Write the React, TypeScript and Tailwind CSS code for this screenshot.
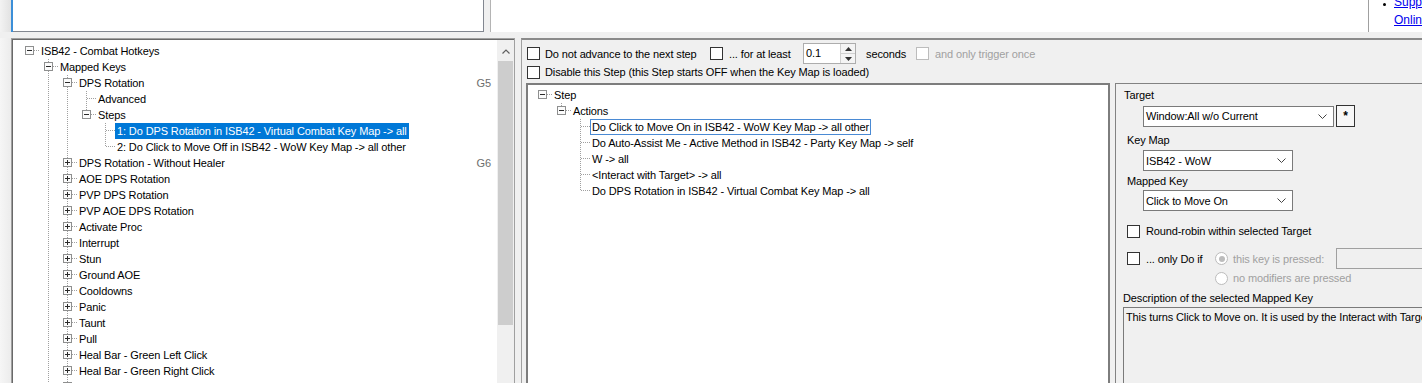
import React from 'react';

type TNode = {
  label: string;
  right?: string;
  sel?: boolean;
  focus?: boolean;
  state?: 'open' | 'closed';
  kids?: TNode[];
};

type Row = { node: TNode; guides: boolean[]; hasNext: boolean; top: boolean };

const closed = (label: string, right?: string): TNode => ({ label, right, state: 'closed', kids: [] });

const keyTree: TNode[] = [
  {
    label: 'ISB42 - Combat Hotkeys',
    state: 'open',
    kids: [
      {
        label: 'Mapped Keys',
        state: 'open',
        kids: [
          {
            label: 'DPS Rotation',
            right: 'G5',
            state: 'open',
            kids: [
              { label: 'Advanced' },
              {
                label: 'Steps',
                state: 'open',
                kids: [
                  { label: '1: Do DPS Rotation in ISB42 - Virtual Combat Key Map -> all', sel: true },
                  { label: '2: Do Click to Move Off in ISB42 - WoW Key Map -> all other' },
                ],
              },
            ],
          },
          closed('DPS Rotation - Without Healer', 'G6'),
          closed('AOE DPS Rotation'),
          closed('PVP DPS Rotation'),
          closed('PVP AOE DPS Rotation'),
          closed('Activate Proc'),
          closed('Interrupt'),
          closed('Stun'),
          closed('Ground AOE'),
          closed('Cooldowns'),
          closed('Panic'),
          closed('Taunt'),
          closed('Pull'),
          closed('Heal Bar - Green Left Click'),
          closed('Heal Bar - Green Right Click'),
          closed('Heal Bar - Blue Left Click'),
        ],
      },
      closed('Unmapped Keys'),
    ],
  },
];

const stepTree: TNode[] = [
  {
    label: 'Step',
    state: 'open',
    kids: [
      {
        label: 'Actions',
        state: 'open',
        kids: [
          { label: 'Do Click to Move On in ISB42 - WoW Key Map -> all other', focus: true },
          { label: 'Do Auto-Assist Me - Active Method in ISB42 - Party Key Map -> self' },
          { label: 'W -> all' },
          { label: '<Interact with Target> -> all' },
          { label: 'Do DPS Rotation in ISB42 - Virtual Combat Key Map -> all' },
        ],
      },
    ],
  },
];

function flatten(nodes: TNode[], guides: boolean[] = [], out: Row[] = []): Row[] {
  nodes.forEach((n, i) => {
    const hasNext = i < nodes.length - 1;
    out.push({ node: n, guides, hasNext, top: guides.length === 0 && i === 0 });
    if (n.state === 'open' && n.kids) flatten(n.kids, [...guides, hasNext], out);
  });
  return out;
}

function Guide({ on }: { on: boolean }) {
  return (
    <svg width="19" height="16" className="shrink-0" shapeRendering="crispEdges">
      {on && <line x1="9.5" y1="0" x2="9.5" y2="16" stroke="#a0a0a0" strokeDasharray="1 1" />}
    </svg>
  );
}

function Joint({ top, next, box }: { top: boolean; next: boolean; box?: 'open' | 'closed' }) {
  return (
    <svg width="19" height="16" className="shrink-0" shapeRendering="crispEdges">
      <g stroke="#a0a0a0" strokeDasharray="1 1">
        {!top && <line x1="9.5" y1="0" x2="9.5" y2={box ? 3 : 8} />}
        {next && <line x1="9.5" y1={box ? 12 : 8} x2="9.5" y2="16" />}
        <line x1={box ? 14 : 10} y1="7.5" x2="19" y2="7.5" />
      </g>
      {box && (
        <>
          <rect x="5.5" y="3.5" width="8" height="8" fill="#fbfbfb" stroke="#8e8f8f" />
          <path d="M7 7.5h5" stroke="#2a2a2a" />
          {box === 'closed' && <path d="M9.5 5v5" stroke="#2a2a2a" />}
        </>
      )}
    </svg>
  );
}

function TreeRow({ row }: { row: Row }) {
  const n = row.node;
  const label = n.sel
    ? 'bg-[#0078d7] text-white px-[2px]'
    : n.focus
      ? 'border border-[#4a8ad4] px-[1px]'
      : 'px-[2px]';
  return (
    <div className="flex h-[16px] items-center">
      {row.guides.map((g, i) => (
        <Guide key={i} on={g} />
      ))}
      <Joint top={row.top} next={row.hasNext} box={n.state} />
      <span className={`flex h-full items-center whitespace-nowrap ${label}`}>{n.label}</span>
      {n.right && <span className="ml-auto pr-[6px] text-[#6d6d6d]">{n.right}</span>}
    </div>
  );
}

function Check({ disabled }: { disabled?: boolean }) {
  return (
    <div
      className={`h-[13px] w-[13px] shrink-0 border bg-white ${disabled ? 'border-[#bcbcbc]' : 'border-[#333333]'}`}
    />
  );
}

function Radio({ on }: { on?: boolean }) {
  return (
    <div className="flex h-[13px] w-[13px] shrink-0 items-center justify-center rounded-full border border-[#bcbcbc] bg-white">
      {on && <div className="h-[6px] w-[6px] rounded-full bg-[#bcbcbc]" />}
    </div>
  );
}

function Chevron() {
  return (
    <svg width="9" height="5" viewBox="0 0 9 5" className="mr-[6px] shrink-0">
      <path d="M0.5 0.5L4.5 4.5L8.5 0.5" fill="none" stroke="#444" />
    </svg>
  );
}

function Combo({ value, wide }: { value: string; wide?: boolean }) {
  return (
    <div
      className={`flex h-[21px] shrink-0 items-center border border-[#7a7a7a] bg-white pl-[2px] ${wide ? 'w-[191px]' : 'w-[150px]'}`}
    >
      <span className="flex-1 whitespace-nowrap">{value}</span>
      <Chevron />
    </div>
  );
}

export default function App() {
  const leftRows = flatten(keyTree);
  const stepRows = flatten(stepTree);

  return (
    <div className="flex h-[383px] w-[1422px] flex-col overflow-hidden bg-[#f0f0f0] font-['Liberation_Sans',Arial,sans-serif] text-[11px] leading-[16px] tracking-[-0.12px] text-black">
      {/* top strip */}
      <div className="flex h-[32px] shrink-0">
        <div className="w-[11px] shrink-0 bg-gradient-to-r from-[#f3f3f3] to-[#e2e2e2]" />
        <div className="w-[2px] shrink-0 bg-[#3c8fd8]" />
        <div className="w-[471px] shrink-0 border-r border-b border-[#828790] bg-white" />
        <div className="w-[6px] shrink-0" />
        <div className="flex min-w-0 flex-1 border-l border-[#b4b4b4] bg-white">
          <div className="min-w-0 flex-1" />
          <div className="w-px shrink-0 bg-[#a0a0a0]" />
          <div className="flex w-[53px] shrink-0 overflow-hidden pl-[14px] text-[12px] leading-[18px] tracking-normal">
            <div className="mt-[3px] h-[3px] w-[3px] shrink-0 rounded-full bg-black" />
            <div className="mt-[-7px] ml-[8px] flex flex-col whitespace-nowrap text-[#0000ee] underline">
              <a href="#">Supported</a>
              <a href="#">Online Help</a>
            </div>
          </div>
        </div>
      </div>
      <div className="h-[6px] shrink-0" />

      {/* lower area */}
      <div className="flex min-h-0 flex-1">
        <div className="w-[11px] shrink-0 bg-gradient-to-r from-[#f6f6f6] to-[#ececec]" />

        {/* left tree panel */}
        <div className="flex w-[504px] shrink-0 border-t border-r border-l border-[#a0a0a0]">
          <div className="flex min-w-0 flex-1 border-t border-l border-[#696969] bg-white">
            <div className="min-w-0 flex-1 overflow-hidden pt-[3px] pl-[7px]">
              {leftRows.map((r, i) => (
                <TreeRow key={i} row={r} />
              ))}
            </div>
            <div className="flex w-[17px] shrink-0 flex-col bg-[#f0f0f0]">
              <div className="flex h-[20px] items-center justify-center pt-[2px]">
                <svg width="8" height="5" viewBox="0 0 8 5">
                  <path d="M0.5 4.5L4 1L7.5 4.5" fill="none" stroke="#606060" strokeWidth="1.2" />
                </svg>
              </div>
              <div className="mx-[1px] mt-[1px] h-[264px] bg-[#cdcdcd]" />
            </div>
          </div>
        </div>

        <div className="w-[6px] shrink-0" />

        {/* step editor */}
        <div className="flex min-w-0 flex-1 flex-col border-t-2 border-l border-t-[#8a8a8a] border-l-[#a0a0a0]">
          <div className="mt-[3px] flex h-[21px] items-center pl-[5px]">
            <Check />
            <span className="ml-[5px] w-[165px] shrink-0 whitespace-nowrap">Do not advance to the next step</span>
            <Check />
            <span className="ml-[6px] w-[74px] shrink-0 whitespace-nowrap">... for at least</span>
            <div className="flex h-[21px] w-[53px] shrink-0 border border-[#adadad] bg-white">
              <span className="flex-1 pl-[2px] leading-[19px]">0.1</span>
              <div className="flex w-[15px] flex-col border-l border-[#d0d0d0]">
                <div className="flex flex-1 items-center justify-center border-b border-[#d0d0d0] bg-[#f4f4f4]">
                  <svg width="7" height="4" viewBox="0 0 7 4">
                    <path d="M0 4L3.5 0L7 4Z" fill="#333" />
                  </svg>
                </div>
                <div className="flex flex-1 items-center justify-center bg-[#f4f4f4]">
                  <svg width="7" height="4" viewBox="0 0 7 4">
                    <path d="M0 0L3.5 4L7 0Z" fill="#333" />
                  </svg>
                </div>
              </div>
            </div>
            <span className="ml-[10px] w-[50px] shrink-0 whitespace-nowrap">seconds</span>
            <Check disabled />
            <span className="ml-[6px] whitespace-nowrap text-[#a0a0a0]">and only trigger once</span>
          </div>
          <div className="flex h-[16px] items-center pl-[5px]">
            <Check />
            <span className="ml-[5px] whitespace-nowrap">
              Disable this Step (this Step starts OFF when the Key Map is loaded)
            </span>
          </div>

          <div className="mt-[3px] flex min-h-0 flex-1">
            {/* actions tree */}
            <div className="ml-[4px] flex w-[584px] shrink-0 border-t-2 border-r-2 border-l-2 border-[#7d7d7d] bg-white">
              <div className="min-w-0 flex-1 overflow-hidden pt-[2px] pl-[5px]">
                {stepRows.map((r, i) => (
                  <TreeRow key={i} row={r} />
                ))}
              </div>
            </div>

            <div className="w-[5px] shrink-0" />

            {/* mapped key details */}
            <div className="flex min-w-0 flex-1 flex-col overflow-hidden border-t border-l border-[#828282]">
              <div className="mt-[4px] pl-[8px] leading-[14px]">Target</div>
              <div className="mt-[3px] flex items-center pl-[27px]">
                <Combo value="Window:All w/o Current" wide />
                <div className="ml-[2px] flex h-[22px] w-[19px] shrink-0 items-center justify-center border border-[#333333] bg-[#f7f7f7] text-[12px] font-bold">
                  *
                </div>
              </div>
              <div className="mt-[6px] pl-[11px] leading-[14px]">Key Map</div>
              <div className="mt-[3px] pl-[27px]">
                <Combo value="ISB42 - WoW" />
              </div>
              <div className="mt-[3px] pl-[11px] leading-[14px]">Mapped Key</div>
              <div className="mt-[2px] pl-[27px]">
                <Combo value="Click to Move On" />
              </div>

              <div className="mt-[12px] flex h-[16px] items-center pl-[11px]">
                <Check />
                <span className="ml-[6px] whitespace-nowrap">Round-robin within selected Target</span>
              </div>
              <div className="mt-[9px] flex h-[21px] items-center pl-[11px]">
                <Check />
                <span className="ml-[6px] w-[69px] shrink-0 whitespace-nowrap">... only Do if</span>
                <Radio on />
                <span className="ml-[5px] w-[103px] shrink-0 whitespace-nowrap text-[#a0a0a0]">this key is pressed:</span>
                <div className="h-[21px] w-[120px] shrink-0 border border-[#a0a0a0] bg-[#f0f0f0]" />
              </div>
              <div className="mt-[1px] flex h-[16px] items-center pl-[99px]">
                <Radio />
                <span className="ml-[5px] whitespace-nowrap text-[#a0a0a0]">no modifiers are pressed</span>
              </div>
              <div className="mt-[5px] pl-[7px] leading-[14px]">Description of the selected Mapped Key</div>
              <div className="mt-[2px] ml-[7px] w-[400px] flex-1 overflow-hidden border-t border-l border-[#7a7a7a] bg-[#f0f0f0] pt-[1px] pl-[2px] whitespace-nowrap">
                This turns Click to Move on. It is used by the Interact with Target action.
              </div>
            </div>
          </div>
        </div>
      </div>
    </div>
  );
}
